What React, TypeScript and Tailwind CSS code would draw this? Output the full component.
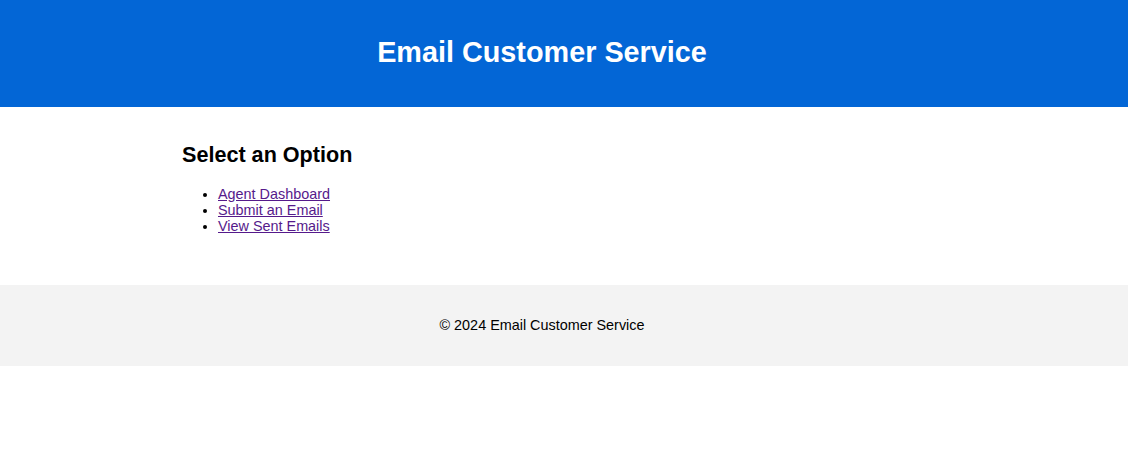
export default function App() {
  const links = ["Agent Dashboard", "Submit an Email", "View Sent Emails"];

  return (
    <div className="min-h-[454px] bg-white font-['Liberation_Sans',Arial,sans-serif] text-[14.4px] text-black">
      <header className="flex h-[107px] items-center justify-center bg-[#0366d6] pb-[3px] pr-[44px] text-white">
        <h1 className="m-0 text-[28.8px] font-bold leading-[33px]">Email Customer Service</h1>
      </header>

      <div className="w-[1084px]">
        <main className="mx-auto max-w-[720px] pb-[51px] pt-[35px]">
          <h2 className="m-0 text-[21.6px] font-bold leading-[25px]">Select an Option</h2>
          <ul className="mt-[19px] list-disc pl-[36px]">
            {links.map((label) => (
              <li key={label} className="leading-[16px]">
                <a href="#" className="text-[#551a8b] underline">
                  {label}
                </a>
              </li>
            ))}
          </ul>
        </main>
      </div>

      <footer className="flex h-[81px] items-center justify-center bg-[#f3f3f3] pr-[44px] pt-[1px]">
        <p className="m-0">&copy; 2024 Email Customer Service</p>
      </footer>
    </div>
  );
}
